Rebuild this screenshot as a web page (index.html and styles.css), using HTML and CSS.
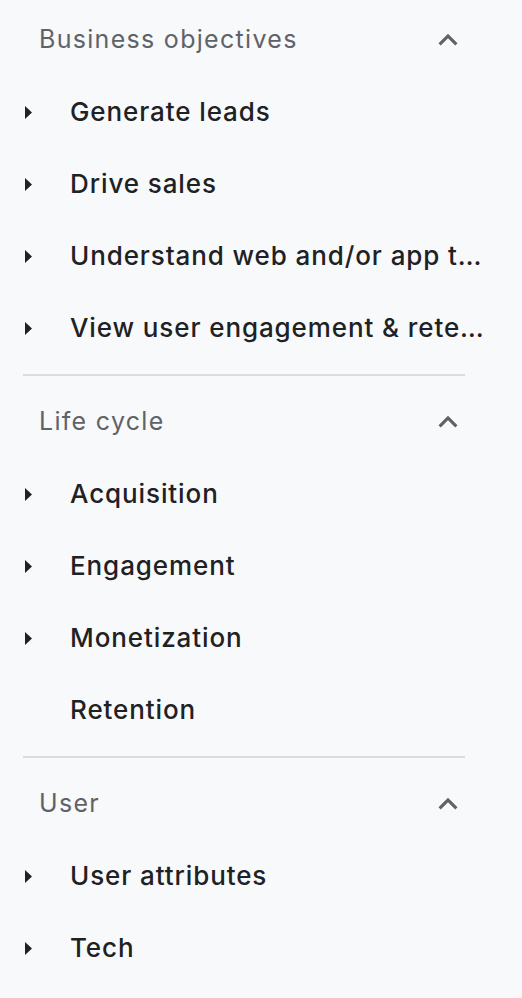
FILE: index.html
```html
<!DOCTYPE html>
<html>
  <head>
    <meta charset="utf-8">
    <title>Explore</title>
    <link rel="stylesheet" href="styles.css">
  </head>
  <body>
    <div class="panel">
      <div class="section">
        <div class="head">
          <span>Business objectives</span>
          <svg class="chev" viewBox="0 0 24 24"><path d="M7.41 15.41L12 10.83l4.59 4.58L18 14l-6-6-6 6z"/></svg>
        </div>
        <div class="item"><svg class="tri" viewBox="0 0 7 13"><path d="M0 0L7 6.5L0 13z"/></svg><span class="label">Generate leads</span></div>
        <div class="item"><svg class="tri" viewBox="0 0 7 13"><path d="M0 0L7 6.5L0 13z"/></svg><span class="label">Drive sales</span></div>
        <div class="item"><svg class="tri" viewBox="0 0 7 13"><path d="M0 0L7 6.5L0 13z"/></svg><span class="label">Understand web and/or app traffic</span></div>
        <div class="item"><svg class="tri" viewBox="0 0 7 13"><path d="M0 0L7 6.5L0 13z"/></svg><span class="label">View user engagement &amp; retention</span></div>
      </div>
      <div class="section">
        <div class="head">
          <span>Life cycle</span>
          <svg class="chev" viewBox="0 0 24 24"><path d="M7.41 15.41L12 10.83l4.59 4.58L18 14l-6-6-6 6z"/></svg>
        </div>
        <div class="item"><svg class="tri" viewBox="0 0 7 13"><path d="M0 0L7 6.5L0 13z"/></svg><span class="label">Acquisition</span></div>
        <div class="item"><svg class="tri" viewBox="0 0 7 13"><path d="M0 0L7 6.5L0 13z"/></svg><span class="label">Engagement</span></div>
        <div class="item"><svg class="tri" viewBox="0 0 7 13"><path d="M0 0L7 6.5L0 13z"/></svg><span class="label">Monetization</span></div>
        <div class="item"><span class="tri blank"></span><span class="label">Retention</span></div>
      </div>
      <div class="section">
        <div class="head">
          <span>User</span>
          <svg class="chev" viewBox="0 0 24 24"><path d="M7.41 15.41L12 10.83l4.59 4.58L18 14l-6-6-6 6z"/></svg>
        </div>
        <div class="item"><svg class="tri" viewBox="0 0 7 13"><path d="M0 0L7 6.5L0 13z"/></svg><span class="label">User attributes</span></div>
        <div class="item"><svg class="tri" viewBox="0 0 7 13"><path d="M0 0L7 6.5L0 13z"/></svg><span class="label">Tech</span></div>
      </div>
    </div>
  </body>
</html>
```

FILE: styles.css
```css
* {
  box-sizing: border-box;
}
body {
  margin: 0;
  background: #f8f9fa;
  font-family: Inter, "Open Sans", sans-serif;
}
.panel {
  padding: 4px 0 0 23px;
}
.section {
  width: 442px;
}
.section + .section {
  border-top: 2px solid #dadce0;
  margin-top: 10px;
  padding-top: 10px;
}
.head {
  height: 72px;
  display: flex;
  align-items: center;
  justify-content: space-between;
  padding: 0 0 2px 16px;
  font-size: 25px;
  letter-spacing: 1.3px;
  color: #5f6368;
}
.chev {
  width: 38px;
  height: 38px;
  margin: 2px -2px 0 0;
  fill: #5f6368;
}
.item {
  height: 72px;
  width: 461px;
  display: flex;
  align-items: center;
  padding: 0 0 1px 2px;
  font-size: 26px;
  font-weight: 500;
  letter-spacing: 0.9px;
  color: #202124;
}
.tri {
  flex: none;
  width: 7px;
  height: 13px;
  fill: #202124;
  margin: 1px 38px 0 0;
}
.label {
  white-space: nowrap;
  overflow: hidden;
  text-overflow: ellipsis;
}
```
